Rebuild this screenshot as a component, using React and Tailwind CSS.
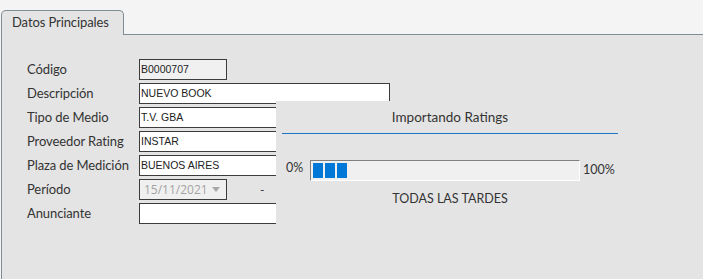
import React from 'react';

const fields = [
  { label: 'Código', value: 'B0000707', short: true },
  { label: 'Descripción', value: 'NUEVO BOOK' },
  { label: 'Tipo de Medio', value: 'T.V. GBA' },
  { label: 'Proveedor Rating', value: 'INSTAR' },
  { label: 'Plaza de Medición', value: 'BUENOS AIRES' },
];

const FieldRow = ({ label, children }) => (
  <div className="flex items-center h-[21px]">
    <span className="w-[112px] text-[13px] tracking-[-0.1px] text-[#333] leading-none">{label}</span>
    {children}
  </div>
);

const App = () => {
  return (
    <div className="w-[703px] h-[279px] bg-[#f4f4f4] flex flex-col overflow-hidden font-['Lato',sans-serif]">
      {/* Tabs */}
      <div className="flex items-end h-[35px] pl-[1px] shrink-0">
        <div className="h-[25px] w-[123px] border border-b-0 border-[#7f8d93] rounded-t-[5px] bg-[#e4e4e4] pl-[10px] pt-[5px] text-[13px] tracking-[-0.1px] leading-none text-[#333]">
          Datos Principales
        </div>
        <div className="flex-1 border-b border-[#7f8d93]" />
      </div>

      {/* Panel */}
      <div className="relative flex-1 ml-[1px] bg-[#e4e4e4] border-l border-[#7f8d93]">
        <div className="flex flex-col gap-[3px] pt-[24px] pl-[25px]">
          {fields.map((f) => (
            <FieldRow key={f.label} label={f.label}>
              <div
                className={`h-[21px] border border-[#3c3c3c] flex items-center px-[1px] text-[10.5px] text-[#222] font-['Liberation_Sans',sans-serif] ${
                  f.short ? 'w-[88px] bg-[#f0f0f0]' : 'w-[251px] bg-white'
                }`}
              >
                {f.value}
              </div>
            </FieldRow>
          ))}
          <FieldRow label="Período">
            <div className="h-[21px] w-[88px] border border-[#3c3c3c] bg-[#f0f0f0] flex items-center justify-between pl-[4px] pr-[6px] text-[12px] text-[#a3a3a3] font-['Open_Sans',sans-serif]">
              <span>15/11/2021</span>
              <svg width="8" height="5" viewBox="0 0 8 5">
                <path d="M0 0h8L4 5z" fill="#a8a8a8" />
              </svg>
            </div>
            <span className="ml-[33px] text-[12px] text-[#333]">-</span>
          </FieldRow>
          <FieldRow label="Anunciante">
            <div className="h-[21px] w-[251px] border border-[#3c3c3c] bg-white" />
          </FieldRow>
        </div>

        {/* Import progress dialog */}
        <div className="absolute left-[274px] top-[66px] w-[348px] bottom-0 bg-[#e4e4e4] flex flex-col items-center pt-[6px]">
          <div className="h-[20px] flex items-center text-[13.5px] text-[#333]">Importando Ratings</div>
          <div className="mt-[6px] w-[336px] h-[1px] bg-[#1f74c4]" />
          <div className="mt-[26px] w-full flex items-center pl-[10px]">
            <span className="w-[24px] -mt-[4px] text-[12.5px] text-[#333]">0%</span>
            <div className="w-[270px] h-[21px] bg-[#f0f0f0] border border-t-[#808080] border-l-[#808080] border-b-white border-r-white flex items-center gap-[2px] pl-[2px]">
              <div className="w-[10px] h-[15px] bg-[#0078d7]" />
              <div className="w-[10px] h-[15px] bg-[#0078d7]" />
              <div className="w-[10px] h-[15px] bg-[#0078d7]" />
            </div>
            <span className="ml-[3px] text-[12.5px] text-[#333]">100%</span>
          </div>
          <div className="mt-[9px] text-[12.5px] text-[#333]">TODAS LAS TARDES</div>
        </div>
      </div>
    </div>
  );
};

export default App;
